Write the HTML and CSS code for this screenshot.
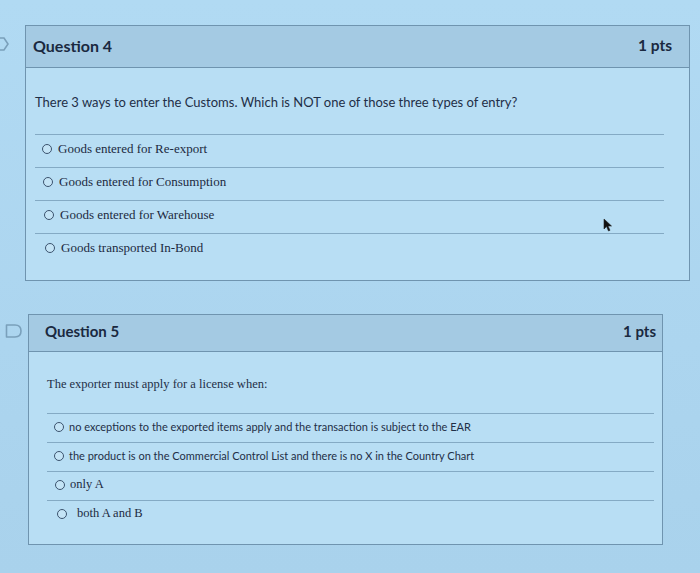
FILE: index.html
```html
<!DOCTYPE html>
<html lang="en">
<head>
<meta charset="utf-8">
<title>Quiz</title>
<link rel="stylesheet" href="styles.css">
</head>
<body>
<main class="page">
  <section class="card card-q4">
    <svg class="flag flag-q4" width="10" height="16" viewBox="0 0 10 16"><path d="M-4 2 L4 2 L8 8 L4 14 L-4 14" fill="none" stroke="#7aa0bb" stroke-width="1.6"/></svg>
    <header class="card-head">
      <h2 class="title">Question 4</h2>
      <span class="pts">1 pts</span>
    </header>
    <div class="card-body">
      <p class="prompt">There 3 ways to enter the Customs. Which is NOT one of those three types of entry?</p>
      <ul class="answers">
        <li class="answer"><span class="radio"></span><span class="serif">Goods entered for Re-export</span></li>
        <li class="answer"><span class="radio"></span><span class="serif">Goods entered for Consumption</span></li>
        <li class="answer"><span class="radio"></span><span class="serif">Goods entered for Warehouse</span></li>
        <li class="answer"><span class="radio"></span><span class="serif">Goods transported In-Bond</span></li>
      </ul>
    </div>
    <svg class="cursor" width="10" height="14" viewBox="0 0 10 14"><path d="M1 1 L1 11 L3.5 8.5 L5.5 13 L7 12.3 L5 8 L8.5 8 Z" fill="#111" stroke="#222" stroke-width="0.6"/></svg>
  </section>

  <section class="card card-q5">
    <svg class="flag flag-q5" width="18" height="16" viewBox="0 0 18 16"><path d="M1.5 2 L10 2 Q16 2 16 8 Q16 14 10 14 L1.5 14 Z" fill="none" stroke="#7aa0bb" stroke-width="1.6" stroke-linejoin="round"/></svg>
    <header class="card-head">
      <h2 class="title">Question 5</h2>
      <span class="pts">1 pts</span>
    </header>
    <div class="card-body">
      <p class="prompt serif">The exporter must apply for a license when:</p>
      <ul class="answers">
        <li class="answer"><span class="radio"></span><span class="sans-sm">no exceptions to the exported items apply and the transaction is subject to the EAR</span></li>
        <li class="answer"><span class="radio"></span><span class="sans-sm">the product is on the Commercial Control List and there is no X in the Country Chart</span></li>
        <li class="answer"><span class="radio"></span><span class="serif">only A</span></li>
        <li class="answer answer-wide"><span class="radio"></span><span class="serif">both A and B</span></li>
      </ul>
    </div>
  </section>
</main>
</body>
</html>
```

FILE: styles.css
```css
* { box-sizing: border-box; }

html, body {
  margin: 0;
  padding: 0;
  background: #acd5ef;
  font-family: Lato, "Liberation Sans", sans-serif;
  color: #1f2f47;
}

.page {
  width: 700px;
  height: 573px;
  padding-top: 25px;
  display: flex;
  flex-direction: column;
  gap: 33px;
  background: linear-gradient(180deg, #b1daf3 0%, #acd5ef 60%, #a9d2ec 100%);
}

.card {
  position: relative;
  background: #b8def4;
  border: 1px solid #6f94af;
}

.card-q4 {
  margin-left: 25px;
  width: 665px;
  height: 256px;
}

.card-q5 {
  margin-left: 28px;
  width: 635px;
  height: 231px;
}

.card-head {
  display: flex;
  align-items: center;
  justify-content: space-between;
  background: #a4cae3;
  border-bottom: 1px solid #6f94af;
}

.card-q4 .card-head {
  height: 42px;
  padding: 0 17px 3px 7px;
}

.card-q5 .card-head {
  height: 37px;
  padding: 0 6px 4px 16px;
}

.title {
  margin: 0;
  font-weight: 700;
  color: #1a2940;
}

.card-q4 .title { font-size: 16px; }
.card-q5 .title { font-size: 15px; }

.pts {
  font-weight: 700;
  color: #1a2940;
}

.card-q4 .pts { font-size: 15.5px; }
.card-q5 .pts { font-size: 15px; }

.prompt {
  margin: 0;
}

.card-q4 .card-body { padding: 24px 25px 15px 9px; }
.card-q4 .prompt { font-size: 13px; line-height: 20px; margin-bottom: 22px; }

.card-q5 .card-body { padding: 23px 8px 16px 18px; }
.card-q5 .prompt { font-size: 12.5px; line-height: 18px; margin-bottom: 20px; }

.answers {
  list-style: none;
  margin: 0;
  padding: 0;
}

.answer {
  display: flex;
  align-items: center;
  border-top: 1px solid #84aac4;
}

.card-q4 .answer { height: 33px; padding: 0 0 5px 7px; gap: 6px; }
.card-q4 .answer:nth-child(2) { padding-left: 8px; }
.card-q4 .answer:nth-child(3) { padding-left: 9px; }
.card-q4 .answer:nth-child(4) { padding-left: 10px; }

.card-q5 .answer { height: 29px; padding: 0 0 3px 7px; gap: 5px; }
.card-q5 .answer:nth-child(3) { padding-left: 8px; }
.card-q5 .answer-wide { padding-left: 10px; gap: 10px; }

.radio {
  flex: none;
  width: 10px;
  height: 10px;
  border-radius: 50%;
  border: 1.5px solid #3b536e;
  background: #c4e4f6;
}

.serif {
  font-family: "Liberation Serif", "Times New Roman", serif;
}

.card-q4 .serif { font-size: 13px; color: #1c2a3f; }
.card-q5 .answer .serif { font-size: 12.5px; color: #1c2a3f; }

.sans-sm {
  font-size: 11px;
  color: #1f2f47;
}

.flag {
  position: absolute;
}

.flag-q4 { left: -26px; top: 10px; }
.flag-q5 { left: -24px; top: 8px; }

.cursor {
  position: absolute;
  left: 577px;
  top: 192px;
}
```
